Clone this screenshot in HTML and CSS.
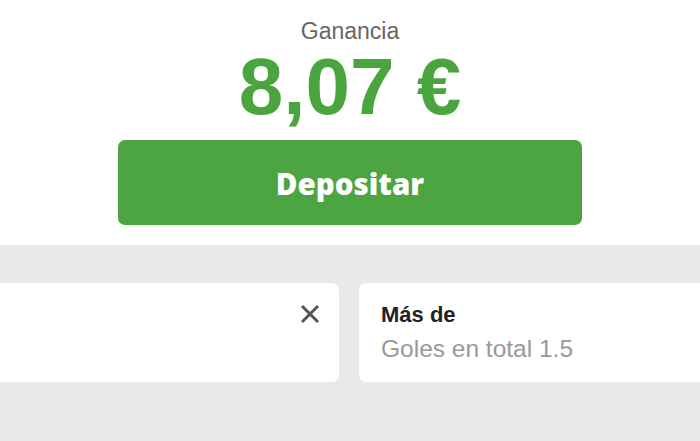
FILE: index.html
```html
<!DOCTYPE html>
<html lang="es">
<head>
<meta charset="utf-8">
<link rel="stylesheet" href="styles.css">
</head>
<body>
<section class="summary">
  <div class="label">Ganancia</div>
  <div class="amount">8,07 €</div>
  <button class="deposit">Depositar</button>
</section>
<section class="tray">
  <div class="cards">
    <div class="card card-left">
      <svg class="close" width="20" height="20" viewBox="0 0 20 20" aria-hidden="true">
        <path d="M2 2 L18 18 M18 2 L2 18" stroke="#555" stroke-width="3" fill="none"/>
      </svg>
    </div>
    <div class="card card-right">
      <div class="card-title">Más de</div>
      <div class="card-sub">Goles en total 1.5</div>
    </div>
  </div>
</section>
</body>
</html>
```
FILE: styles.css
```css
html, body {
  margin: 0;
  padding: 0;
  width: 700px;
  height: 441px;
  overflow: hidden;
  background: #e9e9e9;
  font-family: "Liberation Sans", Arial, sans-serif;
}
.summary {
  background: #fff;
  height: 245px;
  display: flex;
  flex-direction: column;
  align-items: center;
  box-sizing: border-box;
  padding-top: 18px;
}
.label {
  font-size: 23px;
  line-height: 26px;
  color: #666;
}
.amount {
  font-size: 80px;
  line-height: 90px;
  font-weight: bold;
  color: #4ba53f;
  margin-top: -2px;
}
.deposit {
  margin-top: 8px;
  width: 464px;
  height: 85px;
  border: 0;
  border-radius: 7px;
  background: #4ca540;
  color: #fff;
  font-family: "Open Sans", sans-serif;
  font-weight: 800;
  font-size: 29.5px;
  padding: 2px 0 0;
}
.tray {
  padding-top: 38px;
  overflow: hidden;
}
.cards {
  display: flex;
  gap: 20px;
  margin-left: -41px;
}
.card {
  flex: 0 0 380px;
  height: 99px;
  background: #fff;
  border-radius: 7px;
  box-sizing: border-box;
}
.card-left {
  display: flex;
  justify-content: flex-end;
  align-items: flex-start;
  padding: 21px 19px 0 0;
}
.close {
  display: block;
}
.card-right {
  padding: 19px 0 0 22px;
}
.card-title {
  font-size: 22px;
  line-height: 26px;
  font-weight: bold;
  color: #222;
}
.card-sub {
  font-size: 24.5px;
  line-height: 28px;
  color: #999;
  margin-top: 7px;
}
```
